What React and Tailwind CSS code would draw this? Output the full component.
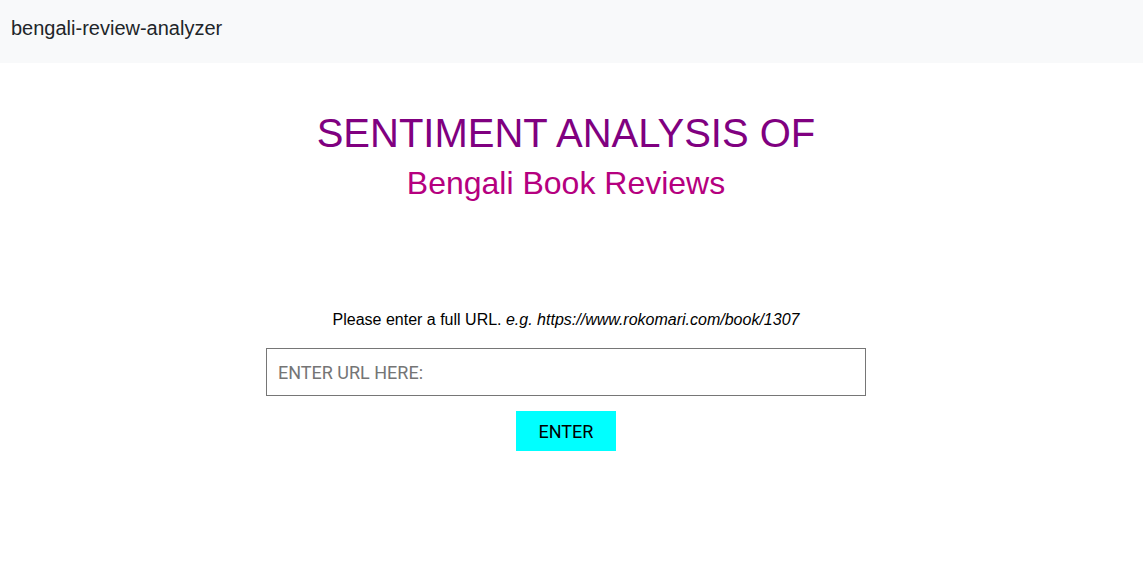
import { useState } from "react";

const App = () => {
  const [url, setUrl] = useState("");

  return (
    <div className="min-h-screen bg-white font-['Liberation_Sans',Arial,sans-serif] text-black">
      <nav className="h-[63px] bg-[#f8f9fa] flex items-center px-[11px]">
        <span className="text-[20px] text-[#212529] leading-none -mt-[8px]">bengali-review-analyzer</span>
      </nav>

      <div className="flex flex-col items-center pr-[11px]">
        <h1 className="mt-[46px] text-[40px] leading-[48px] text-[#800080]">SENTIMENT ANALYSIS OF</h1>
        <h2 className="mt-[7px] text-[32px] leading-[38px] text-[#b5007f]">Bengali Book Reviews</h2>

        <p className="mt-[106px] text-[16px] leading-[24px]">
          Please enter a full URL. <i>e.g. https://www.rokomari.com/book/1307</i>
        </p>

        <input
          className="mt-[16px] w-[600px] h-[48px] border border-[#767676] px-[11px] font-['Roboto',sans-serif] text-[18px] placeholder:text-[#757575] outline-none"
          placeholder="ENTER URL HERE:"
          value={url}
          onChange={(event) => setUrl(event.target.value)}
        />

        <button className="mt-[15px] w-[100px] h-[40px] bg-[#00ffff] font-['Roboto',sans-serif] text-[18px] text-black">
          ENTER
        </button>
      </div>
    </div>
  );
};

export default App;
